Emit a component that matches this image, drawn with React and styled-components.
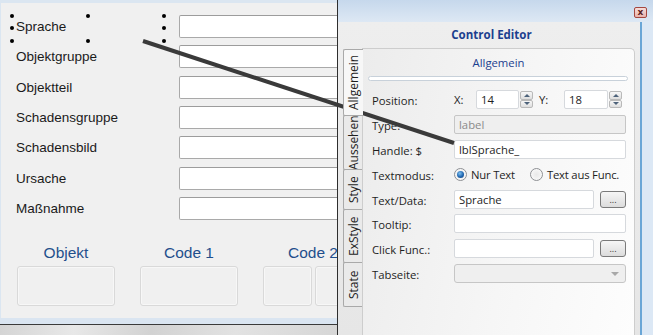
import React from 'react';
import styled, { createGlobalStyle } from 'styled-components';

const GlobalStyle = createGlobalStyle`
  html, body { margin: 0; padding: 0; background: #f0f0f0; }
  * { box-sizing: border-box; }
`;

const Page = styled.div`
  position: relative;
  display: flex;
  width: 653px;
  height: 335px;
  overflow: hidden;
  font-family: "Open Sans", "Noto Sans", sans-serif;
`;

/* ---------- designer pane (left) ---------- */

const DesignPane = styled.div`
  width: 338px;
  flex-shrink: 0;
  display: flex;
  flex-direction: column;
  border-right: 1px solid #2e2e2e;
`;

const Canvas = styled.div`
  flex: 1;
  overflow: hidden;
  background: #f0f0f0;
  border-top: 3px solid #dbe6f1;
  border-left: 1px solid #dbe6f1;
  padding: 12px 0 0 15px;
  font-family: "Liberation Sans", Arial, sans-serif;
`;

const FormGrid = styled.div`
  display: grid;
  grid-template-columns: 163px 220px;
  grid-auto-rows: 23px;
  row-gap: 7.33px;
`;

const FormLabel = styled.div`
  position: relative;
  display: flex;
  align-items: center;
  font-size: 13.5px;
  color: #1a1a1a;
`;

const FormInput = styled.div`
  background: #fff;
  border: 1px solid #a9a9a9;
  border-top-color: #9c9c9c;
  border-radius: 2px;
`;

const Handle = styled.span`
  position: absolute;
  width: 4px;
  height: 4px;
  border-radius: 50%;
  background: #000;
  left: ${p => p.x - 2}px;
  top: ${p => p.y - 2}px;
`;

const ButtonRow = styled.div`
  display: grid;
  grid-template-columns: 98px 98px 100px;
  column-gap: 25px;
  margin: 23px 0 0 1px;
`;

const ButtonGroup = styled.div`
  display: flex;
  flex-direction: column;
  align-items: center;
`;

const Caption = styled.div`
  font-size: 15.5px;
  line-height: 20px;
  color: #1f4f8c;
  white-space: nowrap;
`;

const BoxRow = styled.div`
  display: flex;
  gap: 3px;
  width: 100%;
  margin-top: 3px;
`;

const FlatBox = styled.div`
  flex: 1;
  height: 40px;
  border: 1px solid #d9d9d9;
  border-radius: 3px;
  background: #f0f0f0;
  box-shadow: inset 0 0 0 1px #f7f7f7;
`;

const Strip = styled.div`
  height: 6px;
  background: #dae5f1;
`;

const Taskbar = styled.div`
  height: 11px;
  border-top: 1px solid #3a3a3a;
  background: linear-gradient(100deg, #d4d4d4 0%, #e8e8e8 22%, #d2d2d2 45%, #e2e2e2 70%, #d6d6d6 100%);
`;

/* ---------- control editor (right) ---------- */

const EditorWindow = styled.div`
  flex: 1;
  display: flex;
  flex-direction: column;
  background: #dce8f5;
`;

const TitleBar = styled.div`
  height: 22px;
  display: flex;
  justify-content: flex-end;
  padding: 7px 6px 0 0;
  background: linear-gradient(#c6d8ec, #dde8f4);
`;

const CloseButton = styled.div`
  width: 13px;
  height: 11px;
  border: 1px solid #a4473f;
  border-radius: 2px;
  background: linear-gradient(#f6dcd9, #e8b2ac);
  display: flex;
  align-items: center;
  justify-content: center;
  font: bold 9px/1 "DejaVu Sans", sans-serif;
  color: #5a2222;
`;

const EditorFrame = styled.div`
  flex: 1;
  display: flex;
  padding-right: 11px;
`;

const EditorBody = styled.div`
  flex: 1;
  display: flex;
  flex-direction: column;
  border-right: 2px solid #6aa6d6;
  background: linear-gradient(#eeeeee, #e6e6e6);
  padding-left: 5px;
`;

const EditorTitle = styled.div`
  height: 26px;
  line-height: 26px;
  text-align: center;
  font-weight: bold;
  font-size: 11.5px;
  color: #1c3f8f;
`;

const EditorMain = styled.div`
  flex: 1;
  display: flex;
  padding-right: 5px;
`;

const TabColumn = styled.div`
  width: 19px;
  padding-top: 2px;
  display: flex;
  flex-direction: column;
  position: relative;
  z-index: 1;
`;

const VTab = styled.div`
  height: ${p => p.h}px;
  margin-right: ${p => (p.active ? -1 : 0)}px;
  display: flex;
  align-items: center;
  justify-content: center;
  writing-mode: vertical-rl;
  transform: rotate(180deg);
  font-size: 12px;
  color: #1e1e1e;
  background: ${p => (p.active ? '#f7f7f7' : '#eaeaea')};
  border: 1px solid #a9a9a9;
  border-left: none;
  margin-top: -1px;
  border-radius: 0 2px 2px 0;
`;

const TabPanel = styled.div`
  flex: 1;
  border: 1px solid #cdcdcd;
  border-bottom: none;
  border-radius: 0 5px 0 0;
  background: linear-gradient(100deg, #ececec 0%, #f6f6f6 55%, #fdfdfd 100%);
  padding-top: 6px;
`;

const PanelHeading = styled.div`
  line-height: 15px;
  text-align: center;
  font-size: 11.3px;
  color: #1c3f8f;
`;

const Separator = styled.div`
  height: 5px;
  margin: 6px 6px 0 5px;
  border: 1px solid #c8d1da;
  border-radius: 3px;
  background: #fff;
`;

const FieldGrid = styled.div`
  display: grid;
  grid-template-columns: 82px 1fr;
  grid-auto-rows: 19px;
  row-gap: 5.9px;
  margin-top: 9px;
  padding: 0 8px 0 9px;
  font-size: 11.3px;
  color: #1e1e1e;
`;

const FieldLabel = styled.div`
  display: flex;
  align-items: center;
  padding-top: 2px;
  white-space: nowrap;
`;

const FieldControls = styled.div`
  display: flex;
  align-items: center;
  white-space: nowrap;
`;

const TextBox = styled.div`
  flex: ${p => (p.w ? `0 0 ${p.w}px` : 1)};
  height: 19px;
  display: flex;
  align-items: center;
  padding: 0 4px;
  white-space: nowrap;
  background: ${p => (p.disabled ? '#efefef' : '#fff')};
  color: ${p => (p.disabled ? '#8a8a8a' : '#1e1e1e')};
  border: 1px solid ${p => (p.disabled ? '#c6c6c6' : '#d6d9dd')};
  border-radius: 2px;
`;

const AxisLabel = styled.span`
  flex: 0 0 ${p => p.w}px;
  margin-left: ${p => p.ml || 0}px;
`;

const Spinner = styled.div`
  width: 13px;
  height: 17px;
  display: flex;
  flex-direction: column;
  margin-left: 1px;
`;

const SpinHalf = styled.div`
  flex: 1;
  display: flex;
  align-items: center;
  justify-content: center;
  border: 1px solid #b9b9b9;
  border-radius: 2px;
  background: linear-gradient(#f7f7f7, #dedede);
  &::after {
    content: '';
    border-left: 3px solid transparent;
    border-right: 3px solid transparent;
    ${p => (p.up ? 'border-bottom: 3px solid #4d627a;' : 'border-top: 3px solid #4d627a;')}
  }
`;

const RadioOption = styled.label`
  flex-shrink: 0;
  display: flex;
  align-items: center;
  gap: 4px;
  white-space: nowrap;
  letter-spacing: -0.2px;
  margin-right: ${p => p.mr || 0}px;
`;

const RadioDot = styled.span`
  flex-shrink: 0;
  width: 13px;
  height: 13px;
  border-radius: 50%;
  border: 1px solid #8e9094;
  background: radial-gradient(circle, #e8e8e8 0%, #fdfdfd 100%);
  display: flex;
  align-items: center;
  justify-content: center;
  &::after {
    content: '';
    display: ${p => (p.checked ? 'block' : 'none')};
    width: 7px;
    height: 7px;
    border-radius: 50%;
    background: radial-gradient(circle at 40% 35%, #7fc0f0 0%, #1f66b0 55%, #173f74 100%);
  }
`;

const DotsButton = styled.div`
  flex-shrink: 0;
  width: 26px;
  height: 17px;
  margin-left: 6px;
  display: flex;
  align-items: flex-end;
  justify-content: center;
  padding-bottom: 3px;
  font-size: 9px;
  line-height: 1;
  color: #333;
  border: 1px solid #7a7a7a;
  border-radius: 3px;
  background: linear-gradient(#f6f6f6, #dcdcdc);
`;

const SelectBox = styled.div`
  flex: 1;
  height: 19px;
  display: flex;
  align-items: center;
  justify-content: flex-end;
  padding-right: 6px;
  border: 1px solid #c6c6c6;
  border-radius: 3px;
  background: #efefef;
  &::after {
    content: '';
    border-left: 4px solid transparent;
    border-right: 4px solid transparent;
    border-top: 4px solid #a8a8a8;
  }
`;

const Connector = styled.svg`
  position: absolute;
  left: 0;
  top: 0;
  pointer-events: none;
`;

const fields = ['Sprache', 'Objektgruppe', 'Objektteil', 'Schadensgruppe', 'Schadensbild', 'Ursache', 'Maßnahme'];

const handles = [
  [-4, 1], [72, 1], [148, 1],
  [-4, 13], [148, 13],
  [-4, 26], [72, 26], [148, 26],
];

const tabs = [
  { name: 'Allgemein', h: 67, active: true },
  { name: 'Aussehen', h: 55 },
  { name: 'Style', h: 41 },
  { name: 'ExStyle', h: 54 },
  { name: 'State', h: 45 },
];

function Spin({ value, w }) {
  return (
    <>
      <TextBox w={w}>{value}</TextBox>
      <Spinner>
        <SpinHalf up />
        <SpinHalf />
      </Spinner>
    </>
  );
}

export default function App() {
  return (
    <Page>
      <GlobalStyle />
      <DesignPane>
        <Canvas>
          <FormGrid>
            {fields.map((f, i) => (
              <React.Fragment key={f}>
                <FormLabel>
                  {f}
                  {i === 0 && handles.map(([x, y]) => <Handle key={`${x}-${y}`} x={x} y={y} />)}
                </FormLabel>
                <FormInput />
              </React.Fragment>
            ))}
          </FormGrid>
          <ButtonRow>
            <ButtonGroup>
              <Caption>Objekt</Caption>
              <BoxRow><FlatBox /></BoxRow>
            </ButtonGroup>
            <ButtonGroup>
              <Caption>Code 1</Caption>
              <BoxRow><FlatBox /></BoxRow>
            </ButtonGroup>
            <ButtonGroup>
              <Caption>Code 2</Caption>
              <BoxRow><FlatBox /><FlatBox /></BoxRow>
            </ButtonGroup>
          </ButtonRow>
        </Canvas>
        <Strip />
        <Taskbar />
      </DesignPane>

      <EditorWindow>
        <TitleBar>
          <CloseButton>x</CloseButton>
        </TitleBar>
        <EditorFrame>
          <EditorBody>
            <EditorTitle>Control Editor</EditorTitle>
            <EditorMain>
              <TabColumn>
                {tabs.map(t => (
                  <VTab key={t.name} h={t.h} active={t.active}>{t.name}</VTab>
                ))}
              </TabColumn>
              <TabPanel>
                <PanelHeading>Allgemein</PanelHeading>
                <Separator />
                <FieldGrid>
                  <FieldLabel>Position:</FieldLabel>
                  <FieldControls>
                    <AxisLabel w={22}>X:</AxisLabel>
                    <Spin value="14" w={43} />
                    <AxisLabel w={25} ml={6}>Y:</AxisLabel>
                    <Spin value="18" w={44} />
                  </FieldControls>

                  <FieldLabel>Type:</FieldLabel>
                  <FieldControls><TextBox disabled>label</TextBox></FieldControls>

                  <FieldLabel>Handle: $</FieldLabel>
                  <FieldControls><TextBox>lblSprache_</TextBox></FieldControls>

                  <FieldLabel>Textmodus:</FieldLabel>
                  <FieldControls>
                    <RadioOption mr={15}><RadioDot checked />Nur Text</RadioOption>
                    <RadioOption><RadioDot />Text aus Func.</RadioOption>
                  </FieldControls>

                  <FieldLabel>Text/Data:</FieldLabel>
                  <FieldControls>
                    <TextBox>Sprache</TextBox>
                    <DotsButton>...</DotsButton>
                  </FieldControls>

                  <FieldLabel>Tooltip:</FieldLabel>
                  <FieldControls><TextBox /></FieldControls>

                  <FieldLabel>Click Func.:</FieldLabel>
                  <FieldControls>
                    <TextBox />
                    <DotsButton>...</DotsButton>
                  </FieldControls>

                  <FieldLabel>Tabseite:</FieldLabel>
                  <FieldControls><SelectBox /></FieldControls>
                </FieldGrid>
              </TabPanel>
            </EditorMain>
          </EditorBody>
        </EditorFrame>
      </EditorWindow>

      <Connector width="653" height="335" viewBox="0 0 653 335">
        <line x1="143" y1="41" x2="454" y2="143" stroke="#3a3a3a" strokeWidth="4" />
      </Connector>
    </Page>
  );
}
